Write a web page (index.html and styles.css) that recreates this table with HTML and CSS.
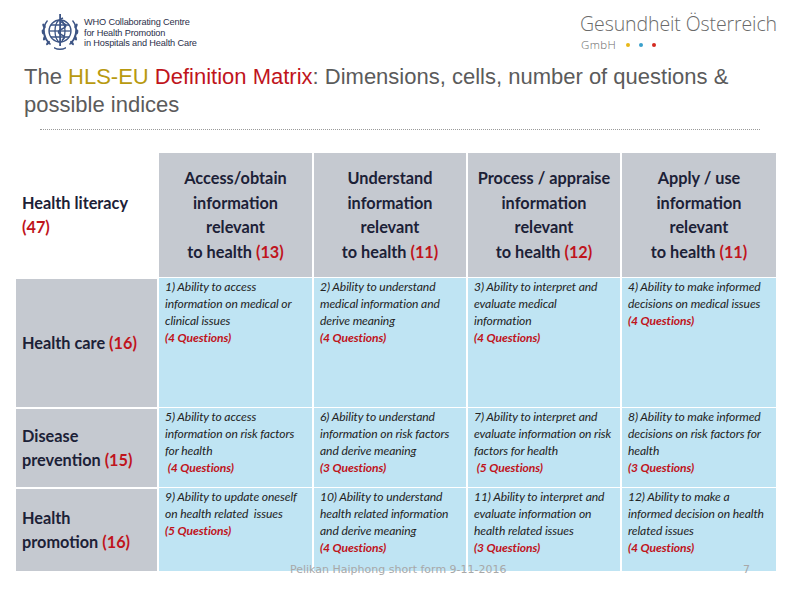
FILE: index.html
```html
<!DOCTYPE html>
<html lang="en">
<head>
<meta charset="utf-8">
<title>HLS-EU Definition Matrix</title>
<link rel="stylesheet" href="styles.css">
</head>
<body>
<div class="slide">
  <header class="top">
    <div class="who">
      <svg class="who-logo" width="42" height="40" viewBox="0 0 42 40" aria-hidden="true">
        <g fill="none" stroke="#3d5585" stroke-width="1.3">
          <circle cx="21" cy="19" r="11"/>
          <ellipse cx="21" cy="19" rx="5" ry="11"/>
          <line x1="10" y1="19" x2="32" y2="19"/>
          <path d="M12 13 h18 M12 25 h18"/>
        </g>
        <g fill="#3d5585">
          <path d="M8 8 q-5 6 -4 13 q1 7 7 12 l1 -1 q-5 -5 -6 -11 q-1 -7 3 -12z"/>
          <path d="M34 8 q5 6 4 13 q-1 7 -7 12 l-1 -1 q5 -5 6 -11 q1 -7 -3 -12z"/>
          <ellipse cx="5" cy="14" rx="1.3" ry="2.6" transform="rotate(-30 5 14)"/>
          <ellipse cx="4" cy="20" rx="1.3" ry="2.6" transform="rotate(-10 4 20)"/>
          <ellipse cx="5.5" cy="26" rx="1.3" ry="2.6" transform="rotate(20 5.5 26)"/>
          <ellipse cx="9" cy="31" rx="1.3" ry="2.6" transform="rotate(40 9 31)"/>
          <ellipse cx="37" cy="14" rx="1.3" ry="2.6" transform="rotate(30 37 14)"/>
          <ellipse cx="38" cy="20" rx="1.3" ry="2.6" transform="rotate(10 38 20)"/>
          <ellipse cx="36.5" cy="26" rx="1.3" ry="2.6" transform="rotate(-20 36.5 26)"/>
          <ellipse cx="33" cy="31" rx="1.3" ry="2.6" transform="rotate(-40 33 31)"/>
          <rect x="20.2" y="2" width="1.8" height="32"/>
          <path d="M15 35 q6 3 12 0 l0 1.5 q-6 3 -12 0z"/>
        </g>
        <path d="M24 6 q-6 2 0 5 q6 3 -1 6 q-7 3 0 6 q5 2 0 5" fill="none" stroke="#3d5585" stroke-width="1.6"/>
      </svg>
      <div class="who-text">WHO Collaborating Centre<br>for Health Promotion<br>in Hospitals and Health Care</div>
    </div>
    <div class="goeg">
      <div class="goeg-name">Gesundheit Österreich</div>
      <div class="goeg-sub"><span class="gmbh">GmbH</span><span class="dot d1"></span><span class="dot d2"></span><span class="dot d3"></span></div>
    </div>
  </header>

  <h1 class="title"><span>The </span><span class="gold">HLS-EU</span><span class="red"> Definition Matrix</span><span>: Dimensions, cells, number of questions &amp;</span><br><span>possible indices</span></h1>
  <div class="rule"></div>

  <div class="matrix">
    <div class="corner"><div>Health literacy<br><span class="num">(47)</span></div></div>
    <div class="colhead"><div>Access/obtain<br>information<br>relevant<br>to health <span class="num">(13)</span></div></div>
    <div class="colhead"><div>Understand<br>information<br>relevant<br>to health <span class="num">(11)</span></div></div>
    <div class="colhead"><div>Process / appraise<br>information<br>relevant<br>to health <span class="num">(12)</span></div></div>
    <div class="colhead"><div>Apply / use<br>information<br>relevant<br>to health <span class="num">(11)</span></div></div>

    <div class="rowhead"><div>Health care <span class="num">(16)</span></div></div>
    <div class="cell">1) Ability to access information on medical or clinical issues<br><b>(4 Questions)</b></div>
    <div class="cell">2) Ability to understand medical information and derive meaning<br><b>(4 Questions)</b></div>
    <div class="cell">3) Ability to interpret and evaluate medical information<br><b>(4 Questions)</b></div>
    <div class="cell">4) Ability to make informed decisions on medical issues<br><b>(4 Questions)</b></div>

    <div class="rowhead"><div>Disease<br>prevention <span class="num">(15)</span></div></div>
    <div class="cell">5) Ability to access information on risk factors for health<br>&nbsp;<b>(4 Questions)</b></div>
    <div class="cell">6) Ability to understand information on risk factors and derive meaning<br><b>(3 Questions)</b></div>
    <div class="cell">7) Ability to interpret and evaluate information on risk factors for health<br>&nbsp;<b>(5 Questions)</b></div>
    <div class="cell">8) Ability to make informed decisions on risk factors for health<br><b>(3 Questions)</b></div>

    <div class="rowhead"><div>Health<br>promotion <span class="num">(16)</span></div></div>
    <div class="cell">9) Ability to update oneself on health related&nbsp; issues<br><b>(5 Questions)</b></div>
    <div class="cell">10) Ability to understand health related information and derive meaning<br><b>(4 Questions)</b></div>
    <div class="cell">11) Ability to interpret and evaluate information on health related issues<br><b>(3 Questions)</b></div>
    <div class="cell">12) Ability to make a informed decision on health related issues<br><b>(4 Questions)</b></div>
  </div>

  <div class="footer">
    <span class="foot-text">Pelikan Haiphong short form 9-11-2016</span>
    <span class="foot-num">7</span>
  </div>
</div>
</body>
</html>
```
FILE: styles.css
```css
html, body {
  margin: 0;
  padding: 0;
  background: #ffffff;
}
.slide {
  position: relative;
  width: 800px;
  height: 600px;
  overflow: hidden;
  font-family: "Liberation Sans", Arial, sans-serif;
}
.top {
  display: flex;
  justify-content: space-between;
  align-items: flex-start;
  height: 58px;
}
.who {
  display: flex;
  align-items: center;
  margin: 12px 0 0 39px;
}
.who-logo {
  display: block;
}
.who-text {
  margin-left: 3px;
  padding-top: 2px;
  font-size: 9.2px;
  line-height: 10.8px;
  color: #2b2f4a;
  letter-spacing: -0.15px;
}
.goeg {
  margin: 10px 23px 0 0;
}
.goeg-name {
  font-family: "Open Sans", sans-serif;
  font-weight: 300;
  font-size: 19.5px;
  line-height: 27px;
  color: #6a6a6a;
  letter-spacing: -0.1px;
}
.goeg-sub {
  display: flex;
  align-items: center;
  font-family: "Open Sans", sans-serif;
  font-weight: 300;
  font-size: 11.5px;
  line-height: 16px;
  color: #6a6a6a;
  margin-left: 1px;
}
.gmbh {
  letter-spacing: 0.4px;
}
.dot {
  width: 4px;
  height: 4px;
  border-radius: 50%;
  margin-left: 9px;
}
.goeg-sub .d1 { margin-left: 10px; background: #e8b818; }
.d2 { background: #3aa0cc; }
.d3 { background: #d42a20; }

.title {
  margin: 5px 20px 0 24px;
  font-weight: normal;
  font-size: 22px;
  line-height: 28px;
  color: #5b5b5b;
}
.gold { color: #b89a10; }
.red { color: #c0141c; }

.rule {
  margin: 10px 40px 0 40px;
  border-top: 1px dotted #9a9a9a;
}

.matrix {
  display: grid;
  grid-template-columns: 141px 153px 152px 152px 154px;
  grid-template-rows: 124px 128px 78px 82px;
  gap: 2px;
  margin: 23px 0 0 16px;
  width: 760px;
  font-family: "Lato", "Open Sans", sans-serif;
  color: #1c2137;
}
.num { color: #c0141c; }
.corner {
  background: #ffffff;
  display: flex;
  align-items: center;
  padding-left: 6px;
  font-weight: bold;
  font-size: 16.3px;
  line-height: 24.5px;
}
.colhead {
  background: #c5c9d0;
  display: flex;
  align-items: center;
  justify-content: center;
  text-align: center;
  font-weight: bold;
  font-size: 16.3px;
  line-height: 24.5px;
}
.rowhead {
  background: #c5c9d0;
  display: flex;
  align-items: center;
  padding-left: 6px;
  font-weight: bold;
  font-size: 16.3px;
  line-height: 24.5px;
}
.cell {
  background: #bfe4f3;
  padding: 0 5px 0 6px;
  margin-top: -1px;
  font-style: italic;
  font-size: 12.1px;
  line-height: 17px;
  color: #232323;
  letter-spacing: -0.1px;
}
.cell b {
  color: #c0141c;
  font-weight: bold;
}

.footer {
  position: absolute;
  left: 290px;
  right: 0;
  top: 563px;
  display: flex;
  justify-content: space-between;
  font-family: "DejaVu Sans", sans-serif;
  font-size: 11px;
  line-height: 14px;
  color: #a8a8a8;
}
.foot-num {
  margin-right: 50px;
}
```
